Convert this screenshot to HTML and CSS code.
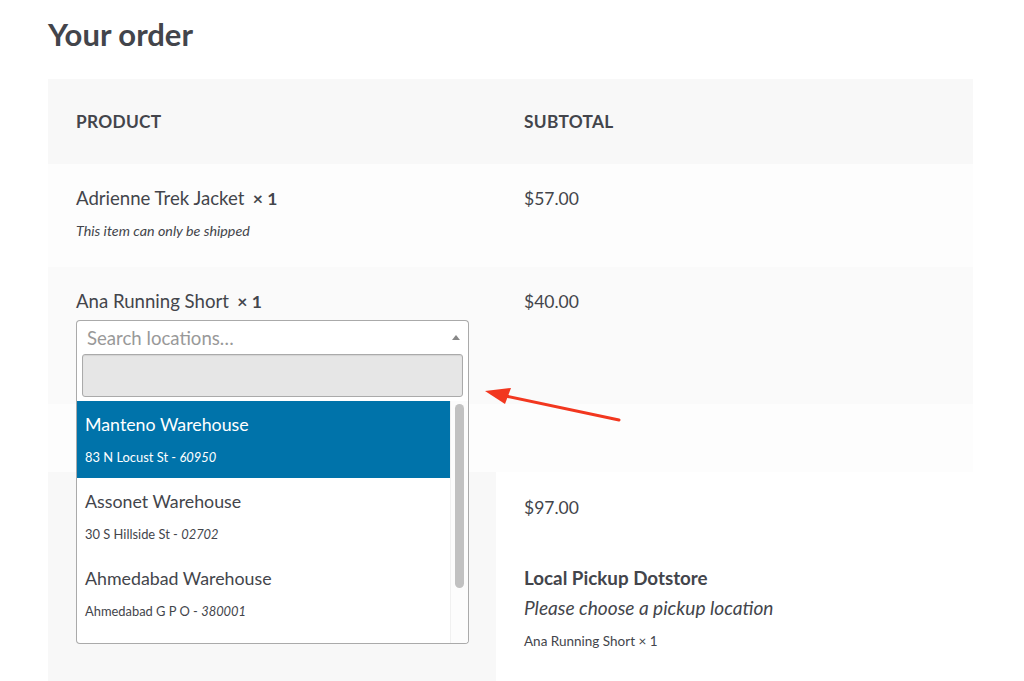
FILE: index.html
```html
<!DOCTYPE html>
<html>
<head>
<meta charset="utf-8">
<link rel="stylesheet" href="styles.css">
</head>
<body>
<h2 class="title">Your order</h2>
<table class="order">
  <thead>
    <tr class="head"><th class="col-product">Product</th><th class="col-total">Subtotal</th></tr>
  </thead>
  <tbody>
    <tr class="row-a">
      <td class="cell"><span class="pname">Adrienne Trek Jacket</span> <strong class="qty">× 1</strong>
        <div class="note">This item can only be shipped</div></td>
      <td class="cell">$57.00</td>
    </tr>
    <tr class="row-b">
      <td class="cell"><span class="pname">Ana Running Short</span> <strong class="qty">× 1</strong>
        <div class="picker">
          <div class="selection">
            <span class="placeholder">Search locations…</span>
            <span class="arrow"></span>
          </div>
          <div class="dropdown">
            <div class="search"><input class="search-field" type="text"></div>
            <div class="results">
              <ul class="options">
                <li class="option active"><div class="opt-name">Manteno Warehouse</div><div class="opt-addr">83 N Locust St - <em>60950</em></div></li>
                <li class="option"><div class="opt-name">Assonet Warehouse</div><div class="opt-addr">30 S Hillside St - <em>02702</em></div></li>
                <li class="option"><div class="opt-name">Ahmedabad Warehouse</div><div class="opt-addr">Ahmedabad G P O - <em>380001</em></div></li>
              </ul>
              <div class="scrollbar"><div class="thumb"></div></div>
            </div>
          </div>
        </div>
      </td>
      <td class="cell">$40.00</td>
    </tr>
  </tbody>
  <tfoot>
    <tr class="row-c"><td class="cell"></td><td class="cell"></td></tr>
    <tr class="row-d">
      <th class="foot-th"></th>
      <td class="foot-td">
        <div class="total">$97.00</div>
        <div class="ship-title">Local Pickup Dotstore</div>
        <div class="ship-note">Please choose a pickup location</div>
        <div class="ship-items">Ana Running Short × 1</div>
      </td>
    </tr>
  </tfoot>
</table>
<svg class="annotation" width="150" height="46" viewBox="0 0 150 46">
  <line x1="138" y1="36" x2="20" y2="11" stroke="#f2371f" stroke-width="3" stroke-linecap="round"/>
  <polygon points="4,7 30,4 24,20" fill="#f2371f"/>
</svg>
</body>
</html>
```
FILE: styles.css
```css
html, body {
  margin: 0;
  padding: 0;
  background: #ffffff;
}
body {
  position: relative;
  padding: 0 48px;
  font-family: "Lato", "Liberation Sans", sans-serif;
  color: #43454b;
  font-size: 17.5px;
  height: 681px;
  overflow: hidden;
}
.title {
  margin: 0;
  padding-top: 14px;
  height: 79px;
  box-sizing: border-box;
  font-size: 31px;
  font-weight: 700;
  line-height: 40px;
  color: #43454b;
}
.order {
  width: 925px;
  border-collapse: collapse;
  border-spacing: 0;
  table-layout: fixed;
}
.col-product { width: 448px; }
.col-total { width: 477px; }
.head th {
  background: #f8f8f8;
  height: 85px;
  padding: 0 28px;
  text-align: left;
  vertical-align: middle;
  font-size: 17.3px;
  font-weight: 700;
  text-transform: uppercase;
  letter-spacing: 0.3px;
  box-sizing: border-box;
}
.cell {
  padding: 21px 28px 0;
  vertical-align: top;
  line-height: 27px;
  box-sizing: border-box;
}
.pname { font-size: 18.6px; }
.row-a .cell { background: #fdfdfd; height: 103px; }
.row-b .cell { background: #fafafa; height: 137px; }
.row-c .cell { background: #fdfdfd; height: 68px; padding: 0; }
.qty { font-weight: 700; margin-left: 4px; }
.note {
  margin-top: 9px;
  font-size: 14.3px;
  font-style: italic;
  line-height: 20px;
}
.picker {
  position: relative;
  margin-top: 5px;
  width: 393px;
  height: 34px;
}
.selection {
  box-sizing: border-box;
  height: 34px;
  border: 1px solid #aaaaaa;
  border-bottom: none;
  border-radius: 4px 4px 0 0;
  background: #ffffff;
  display: flex;
  align-items: center;
  padding: 0 8px 0 10px;
  justify-content: space-between;
}
.placeholder {
  color: #999999;
  font-size: 18.6px;
  line-height: 30px;
}
.arrow {
  width: 0;
  height: 0;
  border-style: solid;
  border-width: 0 4.5px 5px 4.5px;
  border-color: transparent transparent #888888 transparent;
}
.dropdown {
  position: absolute;
  top: 33px;
  left: 0;
  width: 393px;
  height: 291px;
  box-sizing: border-box;
  border: 1px solid #aaaaaa;
  border-top: none;
  border-radius: 0 0 4px 4px;
  background: #ffffff;
  z-index: 5;
  overflow: hidden;
}
.search {
  padding: 1px 5px 4px;
}
.search-field {
  display: block;
  box-sizing: border-box;
  width: 100%;
  height: 43px;
  margin: 0;
  border: 1px solid #aaaaaa;
  border-radius: 3px;
  background: #e6e6e6;
  outline: none;
  box-shadow: inset 0 1px 1px rgba(0,0,0,0.08);
}
.results {
  display: flex;
  height: 243px;
}
.options {
  list-style: none;
  margin: 0;
  padding: 0;
  flex: 1;
  overflow: hidden;
}
.option {
  height: 77px;
  box-sizing: border-box;
  padding: 10px 8px 0;
  color: #43454b;
}
.option.active {
  background: #0073aa;
  color: #ffffff;
}
.opt-name {
  font-size: 17.8px;
  line-height: 26px;
}
.opt-addr {
  margin-top: 10px;
  font-size: 12.9px;
  line-height: 20px;
}
.opt-addr em { font-style: italic; }
.scrollbar {
  width: 18px;
  box-sizing: border-box;
  padding: 3px 4px 0 4px;
  background: #fcfcfc;
  border-left: 1px solid #f0f0f0;
}
.thumb {
  width: 9px;
  height: 184px;
  border-radius: 5px;
  background: #c1c1c1;
}
.foot-th {
  background: #f8f8f8;
  height: 220px;
  padding: 0;
}
.foot-td {
  background: #ffffff;
  padding: 22px 28px 0;
  vertical-align: top;
  box-sizing: border-box;
}
.total { line-height: 27px; }
.ship-title {
  margin-top: 43px;
  font-size: 18.8px;
  font-weight: 700;
  line-height: 27px;
}
.ship-note {
  font-style: italic;
  font-size: 19.1px;
  line-height: 30px;
  margin-top: 2px;
}
.ship-items {
  font-size: 13.5px;
  line-height: 20px;
  margin-top: 8px;
}
.annotation {
  position: absolute;
  left: 481px;
  top: 384px;
}
```
